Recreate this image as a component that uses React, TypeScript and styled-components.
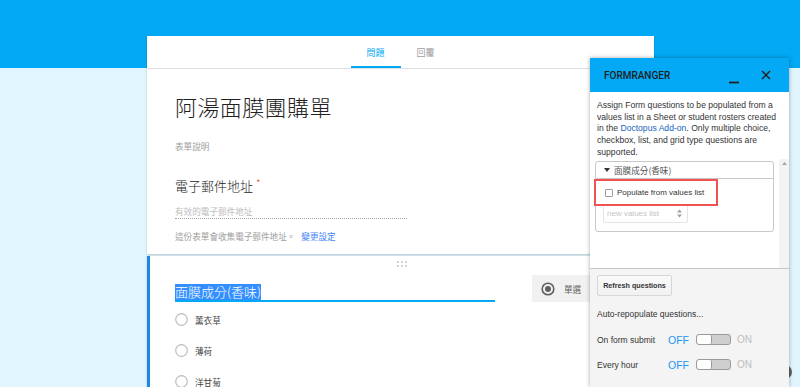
import styled, { createGlobalStyle } from 'styled-components'

const GlobalStyle = createGlobalStyle`
  html, body {
    margin: 0;
    padding: 0;
  }
  body {
    background: #e1f5fe;
    font-family: 'Noto Sans CJK TC', 'Liberation Sans', sans-serif;
  }
  * {
    box-sizing: border-box;
  }
`

const Page = styled.div`
  position: relative;
  width: 800px;
  height: 387px;
  overflow: hidden;
  background: linear-gradient(#03a9f4 0, #03a9f4 68px, #e1f5fe 68px);
  padding: 36px 0 0 147px;
`

const FormColumn = styled.div`
  width: 507px;
  display: flex;
  flex-direction: column;
  gap: 2px;
`

const Card = styled.div<{ $active?: boolean }>`
  background: #fff;
  box-shadow: 0 1px 2px rgba(0, 0, 0, 0.2);
  border-left: ${(p) => (p.$active ? '3px solid #1e88e5' : '0')};
`

const TabBar = styled.div`
  height: 33px;
  display: flex;
  justify-content: center;
  border-bottom: 1px solid #e0e0e0;
`

const Tab = styled.div<{ $active?: boolean }>`
  width: 50px;
  display: flex;
  align-items: center;
  justify-content: center;
  padding-top: 3px;
  font-size: 9px;
  color: ${(p) => (p.$active ? '#03a9f4' : '#9e9e9e')};
  border-bottom: 2px solid ${(p) => (p.$active ? '#03a9f4' : 'transparent')};
`

const Header = styled.div`
  padding: 22px 28px 12px;
`

const Title = styled.h1`
  margin: 0;
  font-size: 22px;
  font-weight: 300;
  line-height: 30px;
  letter-spacing: 0.4px;
  color: #212121;
`

const Description = styled.div`
  margin-top: 19px;
  font-size: 8.6px;
  line-height: 12px;
  color: #9e9e9e;
`

const FieldLabel = styled.div`
  margin-top: 22px;
  font-size: 13px;
  font-weight: 300;
  line-height: 18px;
  color: #212121;
`

const Required = styled.span`
  margin-left: 3px;
  font-size: 10px;
  vertical-align: 4px;
  color: #db4437;
`

const EmailInput = styled.div`
  margin-top: 9px;
  width: 232px;
  height: 15px;
  font-size: 8.6px;
  line-height: 14px;
  color: #bdbdbd;
  border-bottom: 1px dotted #9e9e9e;
`

const Notice = styled.div`
  margin-top: 11px;
  font-size: 8.6px;
  line-height: 12px;
  color: #9e9e9e;
`

const NoticeLink = styled.span`
  margin-left: 6px;
  color: #4285f4;
`

const DragHandle = styled.div`
  height: 16px;
  display: flex;
  align-items: center;
  justify-content: center;
`

const QuestionRow = styled.div`
  display: flex;
  align-items: flex-start;
  padding-left: 25px;
`

const QuestionTitle = styled.div`
  width: 320px;
  height: 30px;
  padding-top: 12px;
  border-bottom: 2px solid #03a9f4;
  font-size: 13px;
  font-weight: 300;
  line-height: 16px;
  color: #212121;
`

const Selected = styled.span`
  display: inline-block;
  vertical-align: top;
  background: #338fff;
  color: #fff;
  line-height: 16px;
`

const TypeSelect = styled.div`
  margin: 3px 0 0 37px;
  width: 110px;
  height: 27px;
  display: flex;
  align-items: center;
  gap: 9px;
  padding-left: 9px;
  background: #f1f1f1;
  font-size: 8.6px;
  color: #616161;
`

const Options = styled.div`
  margin-top: 2px;
  padding-left: 25px;
`

const Option = styled.div`
  height: 31px;
  display: flex;
  align-items: center;
  gap: 7px;
  font-size: 8.6px;
  color: #424242;
`

const Fab = styled.div`
  position: absolute;
  left: 778px;
  top: 365px;
  width: 14px;
  height: 14px;
  border-radius: 50%;
  background: #5f5f5f;
  z-index: 1;
`

const Sidebar = styled.aside`
  position: absolute;
  left: 590px;
  top: 58px;
  bottom: 0;
  width: 199px;
  z-index: 2;
  display: flex;
  flex-direction: column;
  background: #fff;
  box-shadow: 0 0 4px rgba(0, 0, 0, 0.35);
  font-family: 'Liberation Sans', Arial, sans-serif;
`

const SidebarHeader = styled.div`
  height: 34px;
  flex-shrink: 0;
  display: flex;
  align-items: center;
  padding: 0 13px 0 14px;
  background: #03a9f4;
`

const SidebarTitle = styled.div`
  flex: 1;
  font-family: Roboto, 'Liberation Sans', sans-serif;
  font-size: 10px;
  font-weight: 500;
  color: #1f1f1f;
`

const HeaderButtons = styled.div`
  display: flex;
  gap: 12px;
`

const HeaderButton = styled.div`
  width: 20px;
  height: 20px;
  display: flex;
  align-items: center;
  justify-content: center;
`

const SidebarBody = styled.div`
  flex: 1;
  min-height: 0;
  display: flex;
  flex-direction: column;
`

const Intro = styled.div`
  padding: 8px 9px 0 7px;
  font-size: 8.6px;
  line-height: 11.7px;
  color: #333;
`

const IntroLink = styled.span`
  color: #1565c0;
`

const ScrollArea = styled.div`
  flex: 1;
  display: flex;
`

const ScrollContent = styled.div`
  flex: 1;
  padding: 2px 5px 0 5px;
`

const ScrollTrack = styled.div`
  width: 10px;
  display: flex;
  justify-content: center;
  padding-top: 3px;
  background: #f3f3f3;
`

const QuestionBox = styled.div`
  border: 1px solid #c8c8c8;
  border-radius: 3px;
  padding-bottom: 8px;
`

const BoxHeader = styled.div`
  height: 17px;
  display: flex;
  align-items: center;
  gap: 4px;
  padding-left: 8px;
  border-bottom: 1px solid #c8c8c8;
  font-family: 'Noto Sans CJK TC', sans-serif;
  font-size: 8.6px;
  color: #555;
`

const CheckRow = styled.div`
  position: relative;
  height: 25px;
  display: flex;
  align-items: center;
  gap: 4px;
  padding: 3px 0 0 9px;
  font-size: 8px;
  color: #333;
`

const Checkbox = styled.div`
  width: 8px;
  height: 8px;
  border: 1px solid #9e9e9e;
  border-radius: 1px;
  background: #fff;
`

const Highlight = styled.div`
  position: absolute;
  left: -2px;
  top: 0;
  width: 124px;
  height: 27px;
  border: 2px solid #ef5350;
`

const ValuesSelect = styled.div`
  margin-left: 7px;
  width: 85px;
  height: 19px;
  display: flex;
  align-items: center;
  justify-content: space-between;
  padding: 0 5px 0 3px;
  border: 1px solid #e4e4e4;
  border-radius: 2px;
  font-size: 8px;
  color: #c4c4c4;
`

const Footer = styled.div`
  height: 119px;
  flex-shrink: 0;
  padding: 6px 7px 0;
  border-top: 1px solid #c6c6c6;
  background: #f4f4f4;
  font-size: 8.5px;
  color: #333;
`

const RefreshButton = styled.div`
  width: 75px;
  height: 21px;
  display: flex;
  align-items: center;
  justify-content: center;
  border: 1px solid #d6d6d6;
  border-radius: 2px;
  background: linear-gradient(#f9f9f9, #f1f1f1);
  font-size: 7.2px;
  font-weight: 700;
  color: #333;
`

const AutoLabel = styled.div`
  margin-top: 12px;
  line-height: 12px;
`

const ToggleList = styled.div`
  margin-top: 7px;
`

const ToggleRow = styled.div`
  height: 25px;
  display: flex;
  align-items: center;
`

const ToggleName = styled.div`
  width: 71px;
`

const State = styled.span<{ $on?: boolean }>`
  font-size: ${(p) => (p.$on ? '10px' : '10.5px')};
  color: ${(p) => (p.$on ? '#bdbdbd' : '#2196f3')};
`

const Switch = styled.div`
  width: 35px;
  height: 11px;
  margin: 0 6px 0 7px;
  border: 1px solid #9a9a9a;
  border-radius: 3px;
  background: #cfcfcf;
  overflow: hidden;
`

const Knob = styled.div`
  width: 15px;
  height: 100%;
  background: #fff;
  border-right: 1px solid #9a9a9a;
  border-radius: 2px;
`

function Dots() {
  return (
    <svg width='10' height='6' viewBox='0 0 10 6'>
      {[1, 5, 9].map((x) =>
        [1, 5].map((y) => <rect key={`${x}-${y}`} x={x - 0.8} y={y - 0.8} width='1.6' height='1.6' fill='#bdbdbd' />)
      )}
    </svg>
  )
}

function RadioIcon({ checked }: { checked?: boolean }) {
  if (checked) {
    return (
      <svg width='14' height='14' viewBox='0 0 14 14'>
        <circle cx='7' cy='7' r='5.8' fill='none' stroke='#616161' strokeWidth='1.6' />
        <circle cx='7' cy='7' r='3' fill='#616161' />
      </svg>
    )
  }
  return (
    <svg width='13' height='13' viewBox='0 0 13 13'>
      <circle cx='6.5' cy='6.5' r='5.8' fill='none' stroke='#bdbdbd' strokeWidth='1.2' />
    </svg>
  )
}

function Toggle({ name }: { name: string }) {
  return (
    <ToggleRow>
      <ToggleName>{name}</ToggleName>
      <State>OFF</State>
      <Switch>
        <Knob />
      </Switch>
      <State $on>ON</State>
    </ToggleRow>
  )
}

const options = ['薰衣草', '薄荷', '洋甘菊']

export default function App() {
  return (
    <Page>
      <GlobalStyle />
      <FormColumn>
        <Card>
          <TabBar>
            <Tab $active>問題</Tab>
            <Tab>回覆</Tab>
          </TabBar>
          <Header>
            <Title>阿湯面膜團購單</Title>
            <Description>表單說明</Description>
            <FieldLabel>
              電子郵件地址<Required>*</Required>
            </FieldLabel>
            <EmailInput>有效的電子郵件地址</EmailInput>
            <Notice>
              這份表單會收集電子郵件地址。<NoticeLink>變更設定</NoticeLink>
            </Notice>
          </Header>
        </Card>

        <Card $active>
          <DragHandle>
            <Dots />
          </DragHandle>
          <QuestionRow>
            <QuestionTitle>
              <Selected>面膜成分(香味)</Selected>
            </QuestionTitle>
            <TypeSelect>
              <RadioIcon checked />
              單選
            </TypeSelect>
          </QuestionRow>
          <Options>
            {options.map((o) => (
              <Option key={o}>
                <RadioIcon />
                {o}
              </Option>
            ))}
          </Options>
        </Card>
      </FormColumn>

      <Fab />

      <Sidebar>
        <SidebarHeader>
          <SidebarTitle>FORMRANGER</SidebarTitle>
          <HeaderButtons>
            <HeaderButton>
              <svg width='10' height='10' viewBox='0 0 10 10' style={{ marginTop: 7 }}>
                <line x1='0' y1='8.5' x2='10' y2='8.5' stroke='#222' strokeWidth='1.8' />
              </svg>
            </HeaderButton>
            <HeaderButton>
              <svg width='10' height='10' viewBox='0 0 10 10'>
                <path d='M1 1 L9 9 M9 1 L1 9' stroke='#222' strokeWidth='1.5' />
              </svg>
            </HeaderButton>
          </HeaderButtons>
        </SidebarHeader>

        <SidebarBody>
          <Intro>
            Assign Form questions to be populated from a values list in a Sheet or student rosters created in the{' '}
            <IntroLink>Doctopus Add-on</IntroLink>. Only multiple choice, checkbox, list, and grid type questions are
            supported.
          </Intro>
          <ScrollArea>
            <ScrollContent>
              <QuestionBox>
                <BoxHeader>
                  <svg width='6' height='4' viewBox='0 0 6 4'>
                    <polygon points='0,0 6,0 3,4' fill='#333' />
                  </svg>
                  面膜成分(香味)
                </BoxHeader>
                <CheckRow>
                  <Checkbox />
                  Populate from values list
                  <Highlight />
                </CheckRow>
                <ValuesSelect>
                  new values list
                  <svg width='5' height='9' viewBox='0 0 5 9'>
                    <polygon points='0,3.5 5,3.5 2.5,0.5' fill='#9e9e9e' />
                    <polygon points='0,5.5 5,5.5 2.5,8.5' fill='#9e9e9e' />
                  </svg>
                </ValuesSelect>
              </QuestionBox>
            </ScrollContent>
            <ScrollTrack>
              <svg width='5' height='3' viewBox='0 0 5 3'>
                <polygon points='0,3 5,3 2.5,0' fill='#a3a3a3' />
              </svg>
            </ScrollTrack>
          </ScrollArea>
        </SidebarBody>

        <Footer>
          <RefreshButton>Refresh questions</RefreshButton>
          <AutoLabel>Auto-repopulate questions...</AutoLabel>
          <ToggleList>
            <Toggle name='On form submit' />
            <Toggle name='Every hour' />
          </ToggleList>
        </Footer>
      </Sidebar>
    </Page>
  )
}
